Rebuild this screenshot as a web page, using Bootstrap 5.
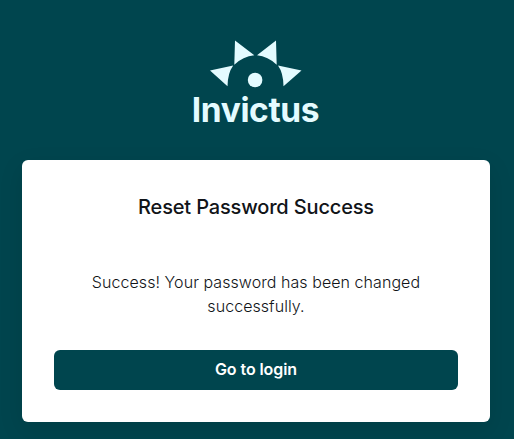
<!DOCTYPE html>
<html lang="en">
<head>
<meta charset="utf-8">
<meta name="viewport" content="width=device-width, initial-scale=1">
<title>Invictus</title>
<link href="https://cdn.jsdelivr.net/npm/bootstrap@5.3.0/dist/css/bootstrap.min.css" rel="stylesheet">
<style>
body{background:#fff;font-family:Inter,"Liberation Sans",sans-serif;overflow:hidden}
.auth-page{background:#00454e;padding:40px 24px 17px 22px;height:439px}
.brand{height:120px;color:#e4fbff}
.brand-mark{width:92px;height:48px}
.brand-name{font-size:33.5px;font-weight:650;line-height:40px;margin-top:2px;letter-spacing:-.4px;padding-right:1px}
.panel{height:262px;border-radius:6px;padding:32px;box-shadow:0 8px 24px rgba(0,0,0,.1)}
.panel-title{font-size:20px;line-height:30px;font-weight:500;color:#111418;letter-spacing:-.16px}
.panel-text{font-size:16px;line-height:24px;font-weight:300;color:#111418;letter-spacing:.06px;margin:48px 0 32px}
.btn-login,.btn-login:hover{background:#00454e;color:#fff}
.btn-login{height:40px;padding-top:7px;font-size:16px;font-weight:600;border-radius:6px;letter-spacing:-.08px}
</style>
</head>
<body>
<main class="auth-page">
<div class="brand d-flex flex-column align-items-center">
<svg class="brand-mark" viewBox="210 40 92 48" fill="currentColor" aria-hidden="true">
<path d="M235 40.5L254.3 55.3Q243 56.5 234.3 64.7ZM276 40.5L257 55.3Q268 56.5 276.7 64.7ZM210 70.5L233.2 65.5Q227.7 73 227.5 86.3ZM301.5 70.5L278 65.5Q283.4 73 283.5 86.3Z"/><circle cx="255.1" cy="80" r="7.3"/></svg>
<div class="brand-name">Invictus</div>
</div>
<section class="panel card border-0 text-center">
<h1 class="panel-title mb-0">Reset Password Success</h1>
<p class="panel-text">Success! Your password has been changed<br>successfully.</p>
<a href="#" class="btn btn-login border-0 w-100">Go to login</a>
</section>
</main>
<script src="https://cdn.jsdelivr.net/npm/bootstrap@5.3.0/dist/js/bootstrap.bundle.min.js"></script>
</body>
</html>
